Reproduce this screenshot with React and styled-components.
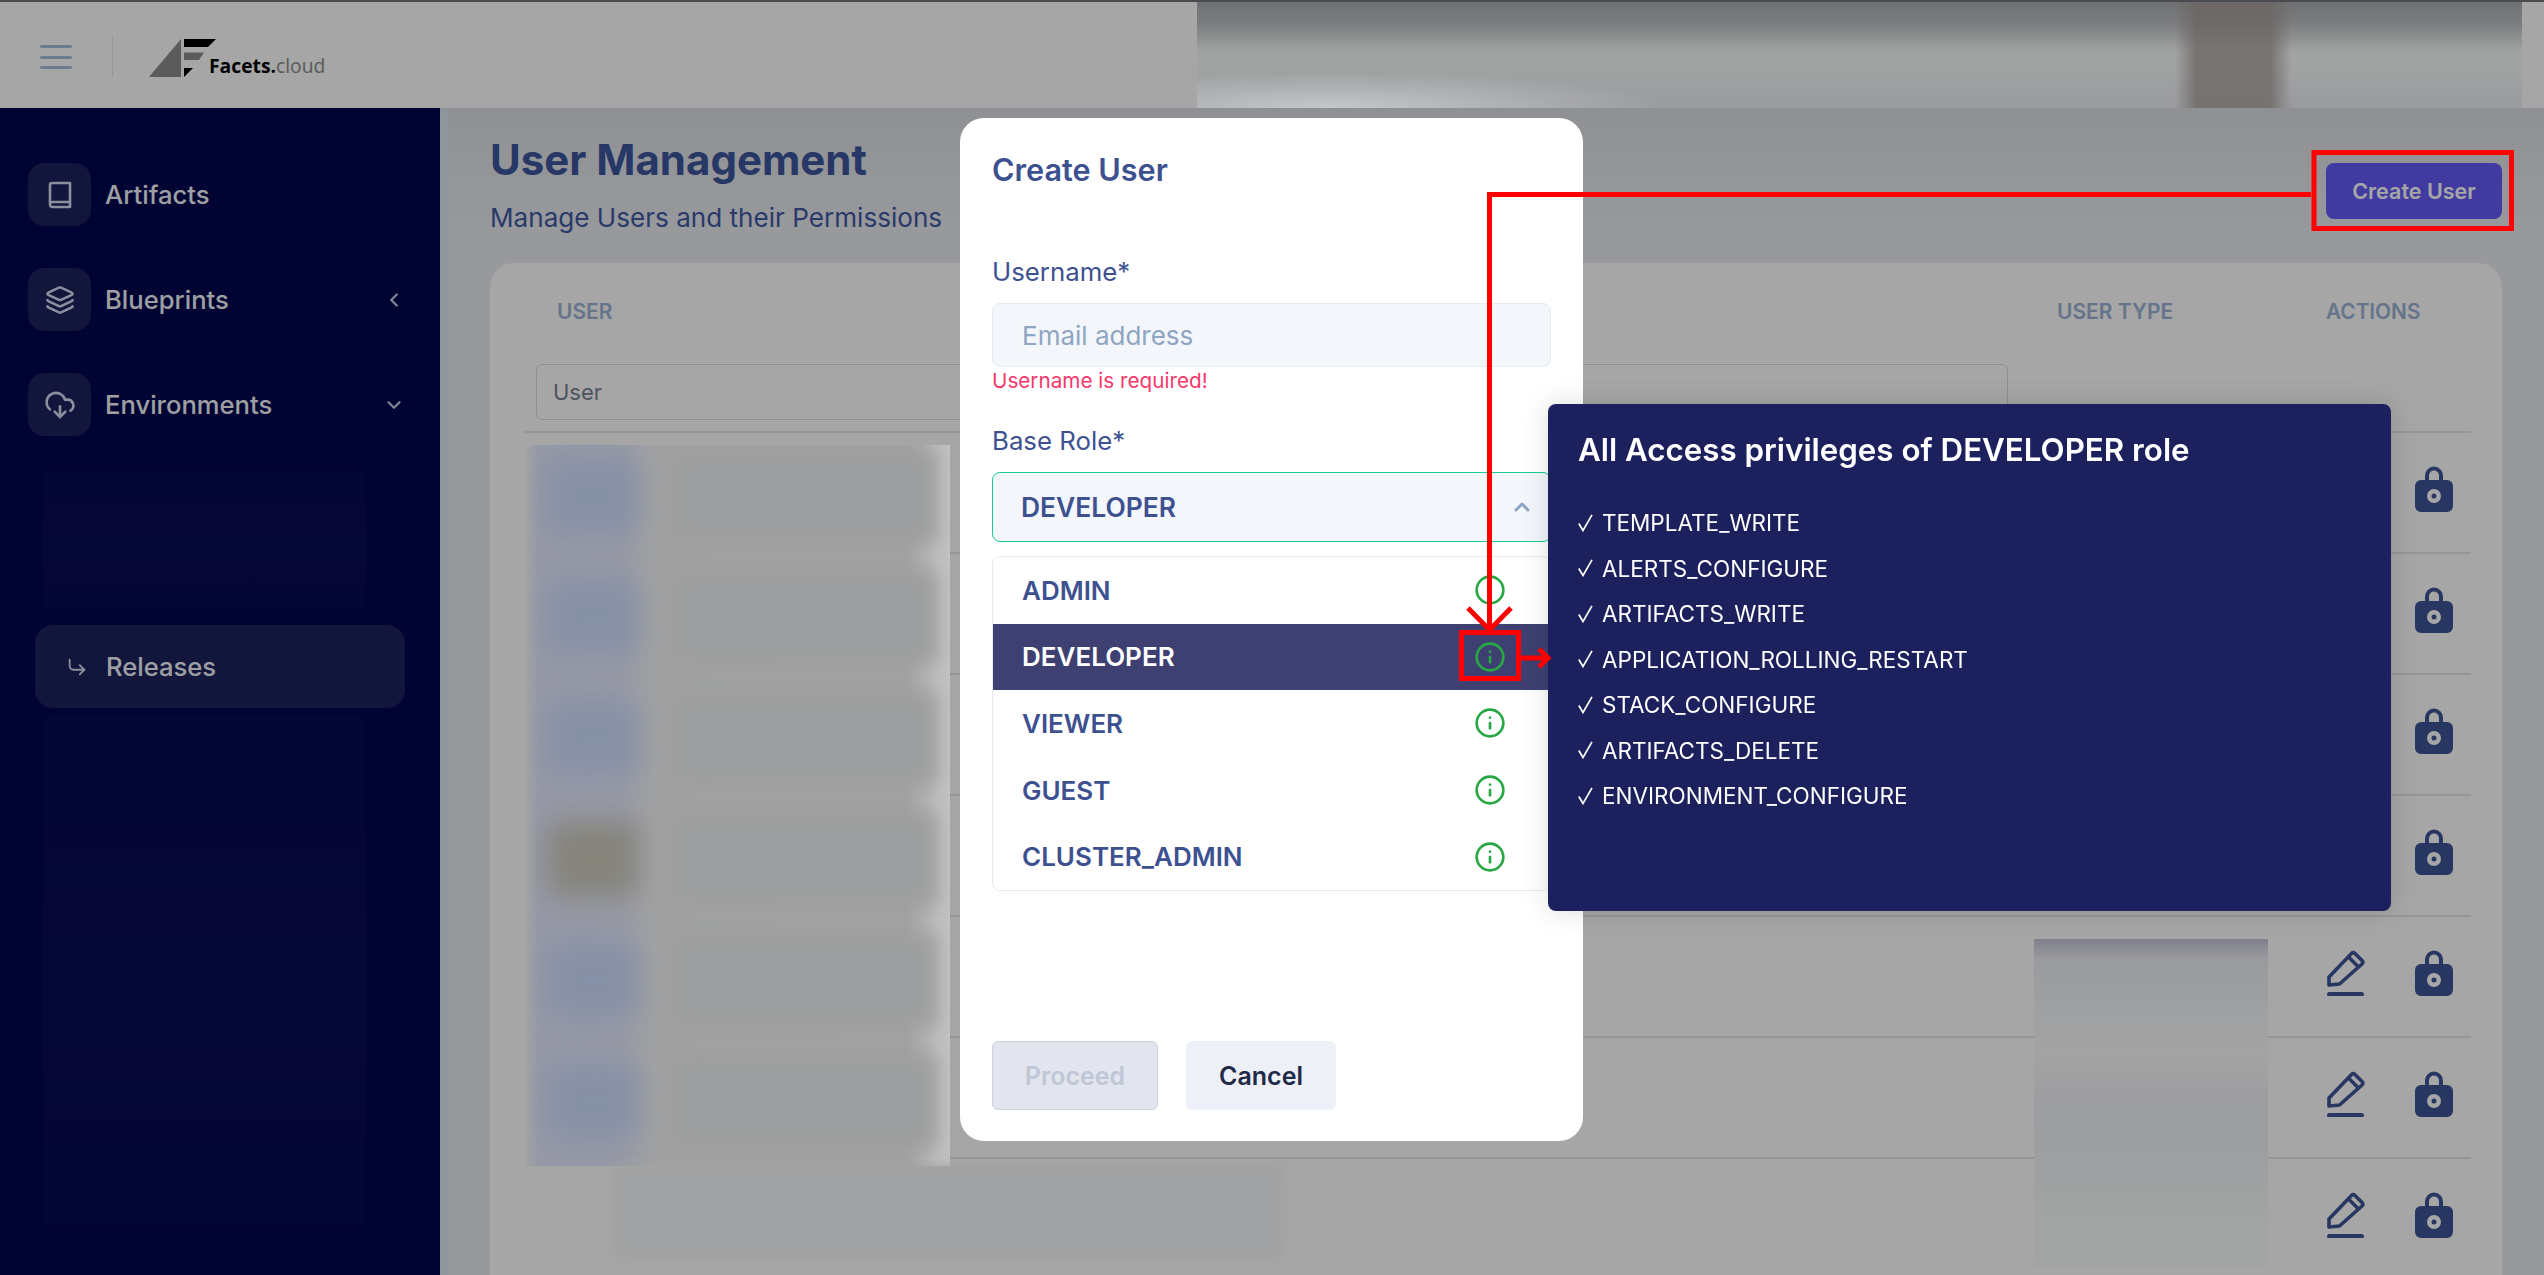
import React from 'react';
import styled, { createGlobalStyle } from 'styled-components';
import { Layers, CloudDownload, CornerDownRight, ChevronLeft, ChevronDown, ChevronUp, Info } from 'lucide-react';

const GlobalStyle = createGlobalStyle`
  html, body {
    margin: 0;
    padding: 0;
    height: 100%;
    overflow: hidden;
    font-family: Inter, "Liberation Sans", sans-serif;
  }
  * { box-sizing: border-box; }
`;

const Page = styled.div`
  width: 2544px;
  height: 1275px;
  display: flex;
  flex-direction: column;
  overflow: hidden;
  background: #e9ecf1;
`;

/* top bar */
const Header = styled.header`
  height: 108px;
  flex: none;
  display: flex;
  align-items: center;
  background: #fff;
  border-top: 2px solid #72747c;
  padding: 0 22px 0 40px;
`;

const Burger = styled.div`
  width: 32px;
  display: flex;
  flex-direction: column;
  gap: 7.5px;
  margin-top: 4px;
  span {
    height: 3px;
    border-radius: 2px;
    background: #a8bedc;
  }
`;

const HeaderDivider = styled.div`
  width: 1px;
  height: 40px;
  margin: 4px 36px 0 40px;
  background: #e2e5ea;
`;

const Logo = styled.div`
  display: flex;
  align-items: flex-end;
  margin-top: 6px;
`;

const LogoText = styled.span`
  font-family: "Open Sans", sans-serif;
  font-size: 19.3px;
  font-weight: 700;
  line-height: 26px;
  color: #000;
  margin-left: -8px;
  margin-bottom: -1px;
  span {
    font-weight: 400;
    color: #8a8a8a;
  }
`;

const HeaderCensor = styled.div`
  position: relative;
  z-index: 11;
  margin-left: auto;
  width: 1325px;
  height: 106px;
  background:
    linear-gradient(90deg, transparent 73.8%, rgba(106, 100, 97, 0.74) 75.4%, rgba(106, 100, 97, 0.74) 81%, transparent 82.6%),
    radial-gradient(ellipse 340px 36px at 10% 100%, #c6c7c8 0%, rgba(198, 199, 200, 0) 100%),
    linear-gradient(180deg, #6f7072 0%, #7d7e80 22%, #a0a1a1 46%, #a2a3a3 56%, #9a9b9f 100%);
`;

const Body = styled.div`
  flex: 1;
  display: flex;
  min-height: 0;
`;

/* sidebar */
const Sidebar = styled.aside`
  width: 440px;
  flex: none;
  background: #02054e;
  padding-top: 55px;
  display: flex;
  flex-direction: column;
`;

const NavItem = styled.div`
  height: 63px;
  margin: 0 35px 42px 28px;
  display: flex;
  align-items: center;
  color: #f1f4fb;
  font-size: 25.6px;
  font-weight: 500;
`;

const NavIcon = styled.div`
  width: 63px;
  height: 63px;
  flex: none;
  border-radius: 16px;
  background: #1c215c;
  display: flex;
  align-items: center;
  justify-content: center;
  color: #d5ddf2;
  margin-right: 14px;
`;

const NavLabel = styled.span`
  flex: 1;
`;

const NavChevron = styled.span`
  display: flex;
  color: #bccbe4;
`;

const SideCensor = styled.div`
  margin: ${(p) => p.$top}px 74px 0 43px;
  height: ${(p) => p.$height}px;
  flex: none;
  background: linear-gradient(180deg, rgba(255, 255, 255, 0.012), rgba(255, 255, 255, 0.028) 55%, rgba(255, 255, 255, 0.01));
`;

const SubItem = styled.div`
  height: 83px;
  margin: 15px 35px 8px 35px;
  padding-left: 31px;
  border-radius: 18px;
  background: #1c215c;
  color: #f1f4fb;
  font-size: 25.6px;
  font-weight: 500;
  display: flex;
  align-items: center;
  gap: 18px;
  flex: none;
  svg { color: #d5ddf2; }
`;

/* main content */
const Main = styled.main`
  flex: 1;
  min-width: 0;
  padding: 26px 42px 0 42px;
  border-left: 8px solid #dde3ee;
  background: linear-gradient(180deg, #dbdee2 0, #e9ecf1 130px);
  display: flex;
  flex-direction: column;
`;

const TitleRow = styled.div`
  display: flex;
  justify-content: space-between;
  align-items: flex-start;
  flex: none;
`;

const Title = styled.h1`
  margin: 0;
  font-size: 42px;
  line-height: 52px;
  font-weight: 700;
  color: #3c559d;
`;

const Subtitle = styled.p`
  margin: 14px 0 0;
  font-size: 26.1px;
  line-height: 36px;
  color: #3f5aa3;
`;

const PrimaryButton = styled.button`
  width: 176px;
  height: 56px;
  margin-top: 29px;
  border: 0;
  border-radius: 8px;
  background: #655af6;
  color: #fff;
  font: 600 21.5px Inter, sans-serif;
`;

const Card = styled.section`
  position: relative;
  margin-top: 27px;
  flex: 1;
  background: #fff;
  border-radius: 24px 24px 0 0;
  padding: 0 31px 0 35px;
`;

const TableHead = styled.div`
  height: 101px;
  padding: 33px 0 0 32px;
  display: flex;
  font-size: 21px;
  line-height: 32px;
  font-weight: 600;
  color: #9bb3d4;
`;

const UserTypeCol = styled.div`
  margin-left: auto;
  width: 269px;
`;

const ActionsCol = styled.div`
  width: 145px;
  font-size: 20.8px;
`;

const FilterInput = styled.div`
  width: 1472px;
  height: 56px;
  margin: 0 0 11px 11px;
  padding-left: 16px;
  display: flex;
  align-items: center;
  border: 1px solid #d7dae0;
  border-radius: 6px;
  font-size: 22px;
  color: #7a8394;
`;

const Row = styled.div`
  height: 121px;
  border-top: 2px solid #e3e7ef;
  display: flex;
  align-items: center;
  justify-content: flex-end;
  padding-bottom: 8px;
`;

const RowActions = styled.div`
  width: 144px;
  display: flex;
  align-items: center;
  gap: 50px;
  color: #3e5596;
`;

/* blurred-out data, sits over the table and keeps its final colour above the dimmer */
const UserCensor = styled.div`
  position: absolute;
  z-index: 11;
  left: 36px;
  top: 182px;
  width: 424px;
  height: 721px;
  overflow: hidden;
  display: flex;
  flex-direction: column;
  background: linear-gradient(90deg, #a3a4a5 0, #9699a7 3%, #979aa6 22%, #a1a2a3 30%, #a2a3a3 90%, #bfc0bf 97%, #c3c4c3 100%);
`;

const CensorRow = styled.div`
  height: 121px;
  flex: none;
  display: flex;
  align-items: center;
  padding: 0 0 20px 22px;
  gap: 30px;
`;

const CensorAvatar = styled.div`
  width: 90px;
  height: 74px;
  flex: none;
  background: ${(p) => p.$color};
  filter: blur(14px);
`;

const CensorText = styled.div`
  width: 270px;
  height: 96px;
  background: #9d9e9f;
  filter: blur(10px);
`;

const TypeCensor = styled.div`
  position: absolute;
  z-index: 11;
  left: 1544px;
  top: 676px;
  width: 234px;
  height: 329px;
  background: linear-gradient(180deg, #7f7f8c 0, #9a9b9e 6%, #a0a1a2 25%, #a3a3a3 35%, #9c9da0 50%, #9fa0a1 75%, #a2a3a3 85%, #a3a4a4 100%);
`;

const BottomCensor = styled.div`
  position: absolute;
  z-index: 11;
  left: 125px;
  top: 903px;
  width: 670px;
  height: 91px;
  background: #a0a1a2;
  filter: blur(6px);
`;

/* modal layer */
const Dimmer = styled.div`
  position: fixed;
  inset: 0;
  z-index: 10;
  background: rgba(0, 0, 0, 0.35);
`;

const Modal = styled.div`
  position: absolute;
  z-index: 20;
  left: 960px;
  top: 118px;
  width: 623px;
  height: 1023px;
  background: #fff;
  border-radius: 24px;
  padding: 30px 32px 31px;
  display: flex;
  flex-direction: column;
`;

const ModalTitle = styled.h2`
  margin: 0;
  font-size: 30.6px;
  line-height: 44px;
  font-weight: 600;
  color: #3d5191;
`;

const FieldLabel = styled.label`
  display: block;
  margin-top: ${(p) => p.$top}px;
  font-size: 25.8px;
  line-height: 36px;
  color: #3d5191;
`;

const TextField = styled.div`
  height: 64px;
  margin-top: 13px;
  padding-left: 29px;
  display: flex;
  align-items: center;
  background: #f3f6fa;
  border: 1px solid #e6eaf1;
  border-radius: 8px;
  font-size: 26px;
  color: #8ea5c3;
`;

const ErrorText = styled.div`
  margin-top: 0;
  font-size: 20.7px;
  line-height: 28px;
  color: #f7386b;
`;

const SelectBox = styled.div`
  height: 70px;
  margin-top: 13px;
  padding: 0 16px 0 28px;
  display: flex;
  align-items: center;
  justify-content: space-between;
  background: #f3f6fa;
  border: 1.5px solid #14cf8f;
  border-radius: 8px;
  font-size: 26.4px;
  font-weight: 600;
  color: #3d5191;
  svg { color: #8ea5c3; }
`;

const RoleList = styled.div`
  margin-top: 14px;
  border: 1px solid #e6eaf1;
  border-radius: 8px;
  overflow: hidden;
`;

const RoleRow = styled.div`
  height: 66.6px;
  padding: 0 44px 0 29px;
  display: flex;
  align-items: center;
  justify-content: space-between;
  font-size: 26px;
  font-weight: 600;
  background: ${(p) => (p.$active ? '#3e4071' : '#fff')};
  color: ${(p) => (p.$active ? '#fff' : '#3d5191')};
  svg { color: #28a745; }
`;

const ModalFooter = styled.div`
  margin-top: auto;
  display: flex;
  gap: 28px;
`;

const ProceedButton = styled.button`
  width: 166px;
  height: 69px;
  border: 1px solid #cdd2de;
  border-radius: 6px;
  background: #e2e5ee;
  color: #bfc6d6;
  font: 600 25px Inter, sans-serif;
`;

const CancelButton = styled.button`
  width: 150px;
  height: 69px;
  border: 0;
  border-radius: 6px;
  background: #edf0f7;
  color: #1f2a48;
  font: 600 25px Inter, sans-serif;
`;

const PrivilegesPopup = styled.div`
  position: absolute;
  z-index: 30;
  left: 1548px;
  top: 404px;
  width: 843px;
  height: 507px;
  padding: 24px 30px;
  background: #1c205c;
  border-radius: 8px;
  box-shadow: 0 0 28px rgba(0, 0, 0, 0.14);
  color: #fff;
`;

const PopupTitle = styled.h3`
  margin: 0 0 28px;
  font-size: 31.3px;
  line-height: 44px;
  font-weight: 600;
`;

const Privilege = styled.div`
  height: 45.5px;
  display: flex;
  align-items: center;
  gap: 9px;
  font-size: 22.5px;
`;

const Annotations = styled.svg`
  position: absolute;
  z-index: 40;
  left: 0;
  top: 0;
  pointer-events: none;
`;

const BookIcon = () => (
  <svg width="26" height="28" viewBox="0 0 26 28" fill="none" stroke="currentColor" strokeWidth="2.6" strokeLinejoin="round" strokeLinecap="round">
    <path d="M3 22.5V4a2 2 0 0 1 2-2h18v24H5.5A2.5 2.5 0 0 1 3 23.500 2.500 2.500 0 0 1 5.500 21H23" />
  </svg>
);

const EditIcon = () => (
  <svg width="38" height="46" viewBox="0 0 38 46" fill="none">
    <path d="M2 35V27L24.500 3.500a2.500 2.500 0 0 1 3.500 0l7 7a2.500 2.500 0 0 1 0 3.500L12.500 34z" stroke="currentColor" strokeWidth="3.600" strokeLinejoin="round" />
    <path d="M21 6.500L31.500 17" stroke="currentColor" strokeWidth="3.600" />
    <rect x="0" y="42" width="37" height="4.600" rx="2.300" fill="currentColor" />
  </svg>
);

const LockIcon = () => (
  <svg width="38" height="46" viewBox="0 0 38 46" fill="none">
    <path d="M12 16V9.500a7 7 0 0 1 14 0V16" stroke="currentColor" strokeWidth="4" />
    <path
      fillRule="evenodd"
      fill="currentColor"
      d="M6 14h26a6 6 0 0 1 6 6v20a6 6 0 0 1-6 6H6a6 6 0 0 1-6-6V20a6 6 0 0 1 6-6zM19 23a7 7 0 1 0 0 14 7 7 0 0 0 0-14zM19 27.500a2.500 2.500 0 1 1 0 5 2.500 2.500 0 0 1 0-5z"
    />
  </svg>
);

const TallCheck = () => (
  <svg width="15" height="18" viewBox="0 0 15 18" fill="none" stroke="currentColor" strokeWidth="1.700">
    <path d="M0.800 9.500L5 16.500L14 0.800" />
  </svg>
);

const LogoMark = () => (
  <svg width="68" height="40" viewBox="0 0 68 40">
    <path d="M0 39L32 1V39z" fill="#8c8c8c" />
    <path d="M35 1H67L59 9H35z" fill="#000" />
    <path d="M35 14.500H55L50 22H35z" fill="#8c8c8c" />
    <path d="M35 30H44L35 39z" fill="#000" />
  </svg>
);

const roles = ['ADMIN', 'DEVELOPER', 'VIEWER', 'GUEST', 'CLUSTER_ADMIN'];

const privileges = [
  'TEMPLATE_WRITE',
  'ALERTS_CONFIGURE',
  'ARTIFACTS_WRITE',
  'APPLICATION_ROLLING_RESTART',
  'STACK_CONFIGURE',
  'ARTIFACTS_DELETE',
  'ENVIRONMENT_CONFIGURE',
];

const avatars = ['#8690a6', '#8690a6', '#8690a6', '#85837a', '#8690a6', '#8690a6'];

const App = () => (
  <Page>
    <GlobalStyle />
    <Header>
      <Burger>
        <span />
        <span />
        <span />
      </Burger>
      <HeaderDivider />
      <Logo>
        <LogoMark />
        <LogoText>
          Facets.<span>cloud</span>
        </LogoText>
      </Logo>
      <HeaderCensor />
    </Header>
    <Body>
      <Sidebar>
        <NavItem>
          <NavIcon>
            <BookIcon />
          </NavIcon>
          <NavLabel>Artifacts</NavLabel>
        </NavItem>
        <NavItem>
          <NavIcon>
            <Layers size={30} strokeWidth={2} />
          </NavIcon>
          <NavLabel>Blueprints</NavLabel>
          <NavChevron>
            <ChevronLeft size={22} strokeWidth={2.600} />
          </NavChevron>
        </NavItem>
        <NavItem>
          <NavIcon>
            <CloudDownload size={32} strokeWidth={2} />
          </NavIcon>
          <NavLabel>Environments</NavLabel>
          <NavChevron>
            <ChevronDown size={22} strokeWidth={2.600} />
          </NavChevron>
        </NavItem>
        <SideCensor $top={-8} $height={140} />
        <SubItem>
          <CornerDownRight size={22} strokeWidth={2} />
          Releases
        </SubItem>
        <SideCensor $top={0} $height={510} />
      </Sidebar>
      <Main>
        <TitleRow>
          <div>
            <Title>User Management</Title>
            <Subtitle>Manage Users and their Permissions</Subtitle>
          </div>
          <PrimaryButton>Create User</PrimaryButton>
        </TitleRow>
        <Card>
          <TableHead>
            <span>USER</span>
            <UserTypeCol>USER TYPE</UserTypeCol>
            <ActionsCol>ACTIONS</ActionsCol>
          </TableHead>
          <FilterInput>User</FilterInput>
          {[0, 1, 2, 3, 4, 5, 6].map((i) => (
            <Row key={i}>
              <RowActions>
                <EditIcon />
                <LockIcon />
              </RowActions>
            </Row>
          ))}
          <UserCensor>
            {avatars.map((color, i) => (
              <CensorRow key={i}>
                <CensorAvatar $color={color} />
                <CensorText />
              </CensorRow>
            ))}
          </UserCensor>
          <TypeCensor />
          <BottomCensor />
        </Card>
      </Main>
    </Body>

    <Dimmer />
    <Modal>
      <ModalTitle>Create User</ModalTitle>
      <FieldLabel $top={62}>Username*</FieldLabel>
      <TextField>Email address</TextField>
      <ErrorText>Username is required!</ErrorText>
      <FieldLabel $top={28}>Base Role*</FieldLabel>
      <SelectBox>
        DEVELOPER
        <ChevronUp size={24} strokeWidth={3} />
      </SelectBox>
      <RoleList>
        {roles.map((role) => (
          <RoleRow key={role} $active={role === 'DEVELOPER'}>
            {role}
            <Info size={32} strokeWidth={2} />
          </RoleRow>
        ))}
      </RoleList>
      <ModalFooter>
        <ProceedButton>Proceed</ProceedButton>
        <CancelButton>Cancel</CancelButton>
      </ModalFooter>
    </Modal>
    <PrivilegesPopup>
      <PopupTitle>All Access privileges of DEVELOPER role</PopupTitle>
      {privileges.map((name) => (
        <Privilege key={name}>
          <TallCheck />
          {name}
        </Privilege>
      ))}
    </PrivilegesPopup>
    <Annotations width="2544" height="1275" fill="none" stroke="#ff0000" strokeWidth="5">
      <rect x="2314" y="152.500" width="197.500" height="76" />
      <path d="M2311 194.500H1489.500V631" />
      <path d="M1468 608L1489.500 630L1511 608" />
      <rect x="1461.500" y="632.500" width="57" height="46" />
      <path d="M1521 658H1548" />
      <path d="M1539 649L1548 658L1539 667" />
    </Annotations>
  </Page>
);

export default App;
